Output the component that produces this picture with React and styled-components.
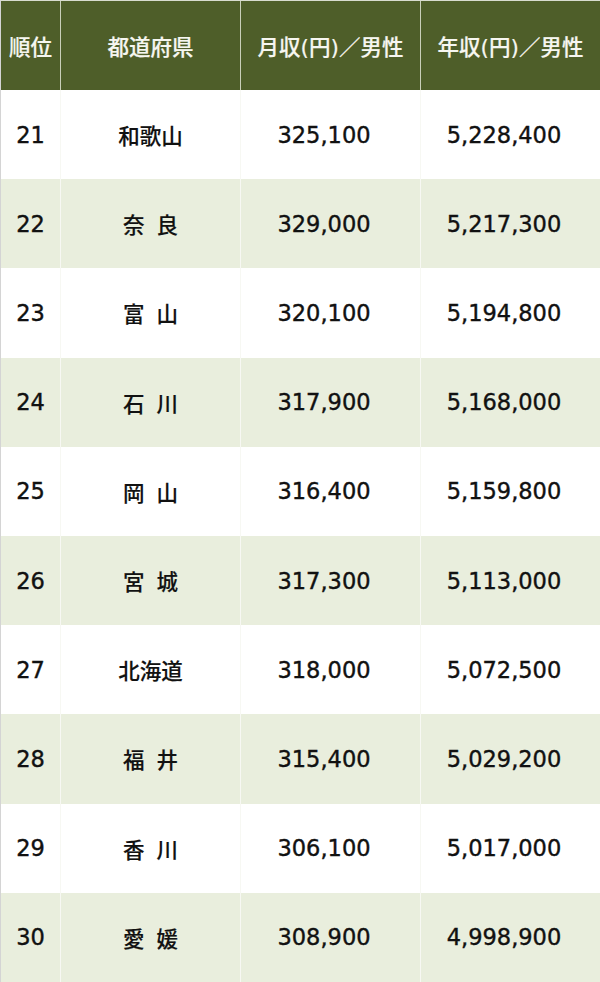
import React from 'react';
import styled, { createGlobalStyle } from 'styled-components';

const GlobalStyle = createGlobalStyle`
  html, body {
    margin: 0;
    padding: 0;
    background: #ffffff;
  }
`;

const Table = styled.div`
  display: grid;
  grid-template-columns: 60px 180px 180px 180px;
  grid-template-rows: 89px repeat(10, 1fr);
  width: 600px;
  height: 982px;
  box-sizing: border-box;
  border-left: 1px solid #d4d4d4;
  border-top: 1px solid #d8dccf;
  font-family: "DejaVu Sans", "Noto Sans CJK JP", sans-serif;
  font-weight: 500;
`;

const HeadCell = styled.div`
  display: flex;
  align-items: center;
  justify-content: center;
  background: #4e5e29;
  color: #f6f6f0;
  font-size: 21.5px;
  -webkit-text-stroke: 0.2px #f6f6f0;
  border-right: 1px solid #c9cfb9;
  box-sizing: border-box;
  &:last-child {
    border-right: none;
  }
`;

const Cell = styled.div`
  display: flex;
  align-items: center;
  justify-content: center;
  background: ${(p) => (p.$shade ? '#e9eedd' : '#ffffff')};
  color: #111111;
  border-right: 1px solid #f7f8f3;
  box-sizing: border-box;
`;

const RankCell = styled(Cell)`
  font-size: 22.5px;
  -webkit-text-stroke: 0.4px #111111;
`;

const NameCell = styled(Cell)`
  font-size: 21.5px;
  word-spacing: 5px;
  -webkit-text-stroke: 0.15px #111111;
`;

const AmountCell = styled(Cell)`
  font-size: 22.5px;
  padding-right: 13px;
  -webkit-text-stroke: 0.4px #111111;
`;

const headers = ['順位', '都道府県', '月収(円)／男性', '年収(円)／男性'];

const rows = [
  ['21', '和歌山', '325,100', '5,228,400'],
  ['22', '奈 良', '329,000', '5,217,300'],
  ['23', '富 山', '320,100', '5,194,800'],
  ['24', '石 川', '317,900', '5,168,000'],
  ['25', '岡 山', '316,400', '5,159,800'],
  ['26', '宮 城', '317,300', '5,113,000'],
  ['27', '北海道', '318,000', '5,072,500'],
  ['28', '福 井', '315,400', '5,029,200'],
  ['29', '香 川', '306,100', '5,017,000'],
  ['30', '愛 媛', '308,900', '4,998,900'],
];

const App = () => {
  return (
    <>
      <GlobalStyle />
      <Table>
        {headers.map((h) => (
          <HeadCell key={h}>{h}</HeadCell>
        ))}
        {rows.map(([rank, name, monthly, yearly], i) => {
          const shade = i % 2 === 1;
          return (
            <React.Fragment key={rank}>
              <RankCell $shade={shade}>{rank}</RankCell>
              <NameCell $shade={shade}>{name}</NameCell>
              <AmountCell $shade={shade}>{monthly}</AmountCell>
              <AmountCell $shade={shade}>{yearly}</AmountCell>
            </React.Fragment>
          );
        })}
      </Table>
    </>
  );
};

export default App;
